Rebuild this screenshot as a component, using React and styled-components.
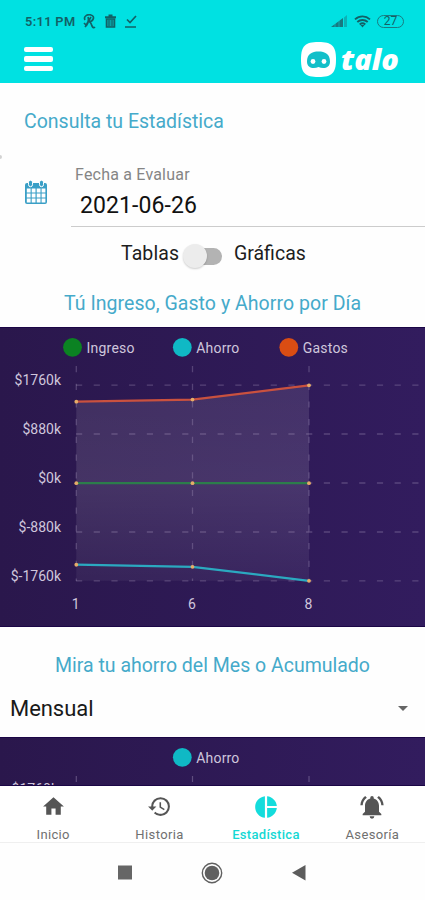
import React from 'react';
import styled, { createGlobalStyle } from 'styled-components';

const GlobalStyle = createGlobalStyle`
  * { box-sizing: border-box; }
  body { margin: 0; background: #fdfdfd; font-family: Roboto, "Liberation Sans", sans-serif; }
  svg { display: block; flex: none; }
`;

const Screen = styled.div`
  position: relative;
  width: 425px;
  height: 900px;
  display: flex;
  flex-direction: column;
  overflow: hidden;
  background: #fefefe;
`;

const DrawerHandle = styled.span`
  position: absolute;
  left: -2px;
  top: 155px;
  width: 4px;
  height: 4px;
  border-radius: 50%;
  background: #d2d2d2;
`;

const Header = styled.header`
  height: 83px;
  flex: none;
  background: #00e1e2;
`;

const StatusBar = styled.div`
  height: 41px;
  padding: 1px 21px 0 25px;
  display: flex;
  align-items: center;
  justify-content: space-between;
  color: #126166;
`;

const StatusGroup = styled.div`
  display: flex;
  align-items: center;
  gap: ${({ $gap }) => $gap}px;
`;

const Clock = styled.span`
  width: 50px;
  font-size: 12.8px;
  font-weight: 600;
  letter-spacing: 0.35px;
  white-space: nowrap;
`;

const Battery = styled.span`
  width: 27px;
  height: 13px;
  border: 1.5px solid #1b7a80;
  border-radius: 7px;
  font-size: 12px;
  line-height: 11px;
  text-align: center;
`;

const AppBar = styled.div`
  height: 36px;
  padding: 0 23px 0 24px;
  display: flex;
  align-items: center;
  justify-content: space-between;
`;

const MenuButton = styled.button`
  width: 29px;
  padding: 0;
  border: 0;
  background: none;
  display: grid;
  gap: 4px;
`;

const MenuBar = styled.span`
  height: 5.5px;
  border-radius: 2px;
  background: #fff;
`;

const Brand = styled.div`
  display: flex;
  align-items: center;
  gap: 5px;
`;

const BrandName = styled.span`
  width: 61px;
  color: #fff;
  font: italic 800 29px/34px "Open Sans", Lato, sans-serif;
  white-space: nowrap;
`;

const Title = styled.h2`
  margin: 0;
  height: ${({ $height }) => $height}px;
  flex: none;
  line-height: ${({ $height }) => $height}px;
  font-size: 19.5px;
  font-weight: 400;
  color: #45aaca;
  letter-spacing: ${({ $spacing }) => $spacing}px;
  text-align: ${({ $align }) => $align || 'center'};
  padding-left: ${({ $inset }) => $inset || 0}px;
  white-space: nowrap;
`;

const DateRow = styled.div`
  height: 66px;
  flex: none;
  display: flex;
  padding-left: 24px;
  gap: 23px;
`;

const CalendarSlot = styled.div`
  padding-top: 18px;
`;

const DateField = styled.label`
  flex: 1;
  padding-left: 4px;
  border-bottom: 1px solid #ccc;
  display: flex;
  flex-direction: column;
`;

const FieldLabel = styled.span`
  padding-top: 4px;
  font-size: 16px;
  line-height: 20px;
  letter-spacing: 0.2px;
  color: #858585;
`;

const FieldValue = styled.span`
  padding-left: 5px;
  font-size: 23px;
  line-height: 41px;
  letter-spacing: 0.1px;
  color: #111;
`;

const ToggleRow = styled.div`
  height: 54px;
  flex: none;
  padding-left: 121px;
  display: flex;
  align-items: center;
`;

const ToggleLabel = styled.span`
  font-size: 19.5px;
  line-height: 24px;
  color: #1d1d1d;
  width: ${({ $width }) => $width}px;
  letter-spacing: ${({ $spacing }) => $spacing}px;
`;

const Switch = styled.div`
  width: 39px;
  height: 17px;
  margin: 4px 12px 0 4px;
  background: linear-gradient(#b3b3b3, #b3b3b3) right / 29px 100% no-repeat;
  border-radius: 9px;
  display: flex;
  align-items: center;
`;

const Knob = styled.span`
  width: 24px;
  height: 24px;
  flex: none;
  border-radius: 50%;
  background: #ececec;
  box-shadow: 0 1px 2px rgba(0, 0, 0, 0.2);
`;

const ChartPanel = styled.section`
  height: ${({ $height }) => $height}px;
  flex: none;
  overflow: hidden;
  border-top: 1px solid #1b0646;
  border-bottom: 1px solid #1b0646;
  background: linear-gradient(90deg, #2a174c, #321c5e);
  margin-bottom: ${({ $after }) => $after || 0}px;
  svg { margin-top: -1px; }
  text { fill: #cfc6dc; font-family: Roboto, sans-serif; font-size: 14px; }
`;

const SelectRow = styled.div`
  height: 57px;
  flex: none;
  padding: 0 17px 0 10px;
  display: flex;
  align-items: center;
  justify-content: space-between;
  font-size: 22px;
  letter-spacing: -0.05px;
  color: #191919;
`;

const Caret = styled.span`
  border: 5.5px solid transparent;
  border-top-color: #666;
  border-bottom: 0;
`;

const Tabs = styled.nav`
  height: 57px;
  flex: none;
  overflow: hidden;
  background: #fff;
  border-bottom: 1px solid #efefef;
  display: grid;
  grid-template-columns: repeat(4, 106.4px);
`;

const Tab = styled.div`
  display: flex;
  flex-direction: column;
  align-items: center;
  color: ${({ $active }) => ($active ? '#14d8d4' : '#707070')};
`;

const TabIcon = styled.div`
  height: 41px;
  display: flex;
  align-items: center;
  color: ${({ $active }) => ($active ? '#14dcdc' : '#555')};
`;

const TabLabel = styled.span`
  font-size: 13px;
  line-height: 16px;
  letter-spacing: ${({ $spacing }) => $spacing}px;
  font-weight: ${({ $active }) => ($active ? 500 : 400)};
  white-space: nowrap;
`;

const SystemNav = styled.footer`
  flex: 1;
  padding: 19px 119px 0 118px;
  display: flex;
  justify-content: space-between;
  align-items: flex-start;
`;

const legendItems = {
  ingreso: { x: 72.5, label: 'Ingreso', color: '#0b8222', width: 48 },
  ahorro: { x: 182.3, label: 'Ahorro', color: '#0fb9c5', width: 43 },
  gastos: { x: 288.8, label: 'Gastos', color: '#da4d13', width: 45 },
};

const columns = [
  { x: 76.3, label: '1' },
  { x: 192.5, label: '6' },
  { x: 309, label: '8' },
];

const levels = [
  { y: 58.2, label: '$1760k' },
  { y: 107, label: '$880k' },
  { y: 156, label: '$0k' },
  { y: 205, label: '$-880k' },
  { y: 253.8, label: '$-1760k' },
];

const series = [
  { color: '#c9513f', ys: [74.7, 72.6, 58.3] },
  { color: '#2c7d4b', ys: [156.2, 156.2, 156.2] },
  { color: '#2ba9c0', ys: [237.7, 239.8, 253.8] },
];

const Legend = ({ items }) =>
  items.map((key) => {
    const { x, label, color, width } = legendItems[key];
    return (
      <g key={key}>
        <circle cx={x} cy="20.3" r="9.4" fill={color} />
        <text x={x + 14} y="26" textLength={width}>{label}</text>
      </g>
    );
  });

const DailyChart = () => (
  <svg width="425" height="300" viewBox="0 0 425 300">
    <defs>
      <linearGradient id="fill" x1="0" y1="0" x2="0" y2="1">
        <stop offset="0" stopColor="#fff" stopOpacity=".1" />
        <stop offset=".5" stopColor="#fff" stopOpacity=".12" />
        <stop offset="1" stopColor="#fff" stopOpacity=".05" />
      </linearGradient>
    </defs>
    <Legend items={['ingreso', 'ahorro', 'gastos']} />
    <path d="M76.3 74.7 192.5 72.6 309 58.3V253.8H76.3Z" fill="url(#fill)" />
    <g stroke="#a99bc0" strokeOpacity=".33" strokeWidth="1.3" strokeDasharray="6.2 11.5">
      {levels.map(({ y }) => <line key={y} x1="76" x2="425" y1={y} y2={y} />)}
      {columns.map(({ x }) => <line key={x} x1={x} x2={x} y1="39" y2="254" />)}
    </g>
    {series.map(({ color, ys }) => (
      <g key={color}>
        <polyline points={ys.map((y, i) => `${columns[i].x},${y}`).join(' ')} fill="none" stroke={color} strokeWidth="2.3" />
        {ys.map((y, i) => <circle key={i} cx={columns[i].x} cy={y} r="1.9" fill="#e6ac68" />)}
      </g>
    ))}
    {levels.map(({ y, label }) => <text key={label} x="61" y={y} textAnchor="end">{label}</text>)}
    {columns.map(({ x, label }) => <text key={label} x={x - 0.5} y="282" textAnchor="middle">{label}</text>)}
  </svg>
);

const SavingsChart = () => (
  <svg width="425" height="49" viewBox="0 0 425 49">
    <Legend items={['ahorro']} />
    <g stroke="#a99bc0" strokeOpacity=".4" strokeWidth="1.2">
      {columns.map(({ x }) => <line key={x} x1={x} x2={x} y1="39" y2="45" />)}
    </g>
    <text x="58" y="57" textAnchor="end">$1760k</text>
  </svg>
);

const Calendar = () => (
  <svg width="24" height="26" viewBox="0 0 24 26">
    <rect x="1" y="4" width="22" height="21" rx="2" fill="#3a9fc6" />
    <g fill="#fff">
      {[9.5, 14.5, 19.5].map((y) =>
        [2.8, 7.7, 12.7, 17.6].map((x) => <rect key={`${x}-${y}`} x={x} y={y} width="3.8" height="4" />)
      )}
    </g>
    {[6.5, 17.5].map((x) => (
      <rect key={x} x={x - 2} y="1.2" width="4" height="6.5" rx="2" fill="#3a9fc6" stroke="#fff" strokeWidth="1" />
    ))}
  </svg>
);

const tabs = [
  { label: 'Inicio', spacing: 0.35, size: 25, path: 'M10 20v-6h4v6h5v-8h3L12 3 2 12h3v8z' },
  { label: 'Historia', spacing: 0.4, size: 25, path: 'M13 3a9 9 0 0 0-9 9H1l3.89 3.89.07.14L9 12H6c0-3.87 3.13-7 7-7s7 3.13 7 7-3.13 7-7 7c-1.93 0-3.68-.79-4.94-2.06l-1.42 1.42A8.95 8.95 0 0 0 13 21a9 9 0 0 0 0-18zm-1 5v5l4.28 2.54.72-1.21-3.5-2.08V8H12z' },
  { label: 'Estadística', spacing: 0.3, size: 26, active: true, path: 'M11 2v20c-5.07-.5-9-4.79-9-10s3.93-9.5 9-10zm2.03 0v8.99H22c-.47-4.74-4.24-8.52-8.97-8.99zm0 11.01V22c4.74-.47 8.5-4.25 8.97-8.99h-8.97z' },
  { label: 'Asesoría', spacing: 0.35, size: 28, path: 'M7.58 4.08 6.15 2.65C3.75 4.48 2.17 7.3 2.03 10.5h2a8.45 8.45 0 0 1 3.55-6.42zm12.39 6.42h2c-.15-3.2-1.73-6.02-4.12-7.85l-1.42 1.43a8.5 8.5 0 0 1 3.54 6.42zM18 11c0-3.07-1.64-5.64-4.5-6.32V4a1.5 1.5 0 0 0-3 0v.68C7.63 5.36 6 7.92 6 11v5l-2 2v1h16v-1l-2-2v-5zm-6 11a2 2 0 0 0 2-2h-4a2 2 0 0 0 2 2z' },
];

export default function App() {
  return (
    <>
      <GlobalStyle />
      <Screen>
        <DrawerHandle />
        <Header>
          <StatusBar>
            <StatusGroup $gap={8}>
              <Clock>5:11 PM</Clock>
              <svg width="13" height="15" viewBox="0 0 13 15" fill="none" stroke="currentColor" strokeWidth="1.7">
                <path d="M2 6C0 2 5 0 8 1c4 1 3 6-2 7M5 3c1 3 0 7-3 10M8 3 5 8c2-1 3 1 4 4 1 2 2 2 3 1M1 9l3 3" />
              </svg>
              <svg width="13" height="15" viewBox="0 0 13 15" fill="none" stroke="currentColor">
                <path d="M1 3.2h11M4.5 1.5h4" strokeWidth="2" />
                <path d="M2.5 5v8h8V5z" fill="currentColor" fillOpacity=".5" strokeWidth="1.6" />
                <path d="M5 6v6M8 6v6" />
              </svg>
              <svg width="12" height="15" viewBox="0 0 12 15" fill="none" stroke="currentColor" strokeWidth="1.7">
                <path d="m2 5.5 3 3L11 2M0 13h11" />
              </svg>
            </StatusGroup>
            <StatusGroup $gap={6}>
              <svg width="17" height="13" viewBox="0 0 17 13">
                <path d="M0 12 12 3v9z" fill="#187980" />
                <path d="M13 2.5 16 0v12h-3z" fill="#187980" fillOpacity=".45" />
                <path d="M4 7v5M8 4v8" stroke="#00e1e2" strokeOpacity=".5" />
              </svg>
              <svg width="17" height="13" viewBox="0 0 17 13" fill="none" stroke="#126166" strokeWidth="1.9">
                <path d="M1 4.4c4.4-4 10.6-4 15 0M3.3 7c3-2.7 7.4-2.7 10.4 0M5.7 9.4c1.8-1.5 3.8-1.5 5.6 0" />
                <path d="m6.5 10 2 2.5 2-2.5z" fill="#126166" stroke="none" />
              </svg>
              <Battery>27</Battery>
            </StatusGroup>
          </StatusBar>
          <AppBar>
            <MenuButton aria-label="Menú">
              <MenuBar /><MenuBar /><MenuBar />
            </MenuButton>
            <Brand>
              <svg width="35" height="35" viewBox="0 0 35 35">
                <path d="M17.5 0C31 0 35 4 35 17.5S31 35 17.5 35 0 31 0 17.5 4 0 17.5 0Z" fill="#fff" />
                <path d="M6 19.5C6 12 11 9.5 17.5 9.5S29 12 29 19.5c0 7-7 7.500-11.500 5.500C13 27 6 26.500 6 19.500Z" fill="#12bfc9" />
                <circle cx="12" cy="19.500" r="2.400" fill="#fff" />
                <circle cx="23" cy="19.500" r="2.400" fill="#fff" />
              </svg>
              <BrandName>talo</BrandName>
            </Brand>
          </AppBar>
        </Header>

        <Title $height={78} $align="left" $inset={24} $spacing={0}>Consulta tu Estadística</Title>
        <DateRow>
          <CalendarSlot><Calendar /></CalendarSlot>
          <DateField>
            <FieldLabel>Fecha a Evaluar</FieldLabel>
            <FieldValue>2021-06-26</FieldValue>
          </DateField>
        </DateRow>
        <ToggleRow>
          <ToggleLabel $width={58} $spacing={0.1}>Tablas</ToggleLabel>
          <Switch><Knob /></Switch>
          <ToggleLabel $width={75} $spacing={0}>Gráficas</ToggleLabel>
        </ToggleRow>
        <Title $height={46} $spacing={0.05}>Tú Ingreso, Gasto y Ahorro por Día</Title>
        <ChartPanel $height={300} $after={24}><DailyChart /></ChartPanel>
        <Title $height={29} $spacing={0}>Mira tu ahorro del Mes o Acumulado</Title>
        <SelectRow>Mensual<Caret /></SelectRow>
        <ChartPanel $height={49}><SavingsChart /></ChartPanel>

        <Tabs>
          {tabs.map(({ label, spacing, size, active, path }) => (
            <Tab key={label} $active={active}>
              <TabIcon $active={active}>
                <svg width={size} height={size} viewBox="0 0 24 24" fill="currentColor"><path d={path} /></svg>
              </TabIcon>
              <TabLabel $spacing={spacing} $active={active}>{label}</TabLabel>
            </Tab>
          ))}
        </Tabs>
        <SystemNav>
          <svg width="14" height="22" viewBox="0 0 14 22"><path d="M0 3.500h14v14H0z" fill="#666" /></svg>
          <svg width="22" height="22" viewBox="0 0 22 22">
            <circle cx="11" cy="11" r="9.700" fill="none" stroke="#606060" strokeWidth="1.400" />
            <circle cx="11" cy="11" r="7.300" fill="#606060" />
          </svg>
          <svg width="14" height="22" viewBox="0 0 14 22"><path d="M13.500 3v15.500L0 10.800z" fill="#5c5c5c" /></svg>
        </SystemNav>
      </Screen>
    </>
  );
}
